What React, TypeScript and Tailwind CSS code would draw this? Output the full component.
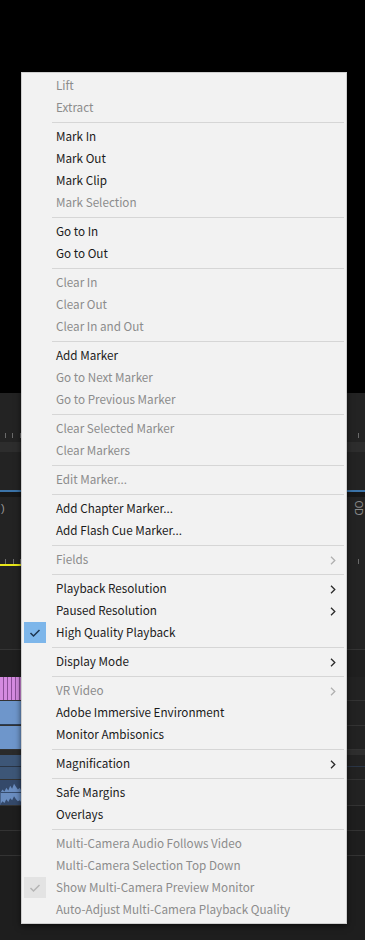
type Item = { label: string; disabled?: boolean; sub?: boolean; checked?: boolean };

const groups: Item[][] = [
  [{ label: 'Lift', disabled: true }, { label: 'Extract', disabled: true }],
  [
    { label: 'Mark In' },
    { label: 'Mark Out' },
    { label: 'Mark Clip' },
    { label: 'Mark Selection', disabled: true },
  ],
  [{ label: 'Go to In' }, { label: 'Go to Out' }],
  [
    { label: 'Clear In', disabled: true },
    { label: 'Clear Out', disabled: true },
    { label: 'Clear In and Out', disabled: true },
  ],
  [
    { label: 'Add Marker' },
    { label: 'Go to Next Marker', disabled: true },
    { label: 'Go to Previous Marker', disabled: true },
  ],
  [
    { label: 'Clear Selected Marker', disabled: true },
    { label: 'Clear Markers', disabled: true },
  ],
  [{ label: 'Edit Marker...', disabled: true }],
  [{ label: 'Add Chapter Marker...' }, { label: 'Add Flash Cue Marker...' }],
  [{ label: 'Fields', disabled: true, sub: true }],
  [
    { label: 'Playback Resolution', sub: true },
    { label: 'Paused Resolution', sub: true },
    { label: 'High Quality Playback', checked: true },
  ],
  [{ label: 'Display Mode', sub: true }],
  [
    { label: 'VR Video', disabled: true, sub: true },
    { label: 'Adobe Immersive Environment' },
    { label: 'Monitor Ambisonics' },
  ],
  [{ label: 'Magnification', sub: true }],
  [{ label: 'Safe Margins' }, { label: 'Overlays' }],
  [
    { label: 'Multi-Camera Audio Follows Video', disabled: true },
    { label: 'Multi-Camera Selection Top Down', disabled: true },
    { label: 'Show Multi-Camera Preview Monitor', disabled: true, checked: true },
    { label: 'Auto-Adjust Multi-Camera Playback Quality', disabled: true },
  ],
];

function Chevron({ disabled }: { disabled?: boolean }) {
  return (
    <svg width="6" height="9" viewBox="0 0 6 9" className="mr-[10px]">
      <path d="M1 0.8 L4.8 4.5 L1 8.2" fill="none" stroke={disabled ? '#b0b0b0' : '#2a2a2a'} strokeWidth="1.3" />
    </svg>
  );
}

function Check({ disabled }: { disabled?: boolean }) {
  return (
    <div
      className={`absolute left-[2px] top-0 w-[22px] h-[21px] flex items-center justify-center ${
        disabled ? 'bg-[#e3e3e3]' : 'bg-[#7db6ea]'
      }`}
    >
      <svg width="12" height="10" viewBox="0 0 12 10">
        <path
          d="M1.5 5 L4.5 8 L10.5 2"
          fill="none"
          stroke={disabled ? '#b5b5b5' : '#1d3550'}
          strokeWidth="1.5"
        />
      </svg>
    </div>
  );
}

function Row({ item }: { item: Item }) {
  return (
    <div className="relative h-[22px] flex items-center justify-between">
      {item.checked && <Check disabled={item.disabled} />}
      <span className={`pl-[34px] pb-[2px] ${item.disabled ? 'text-[#8c8c8c]' : 'text-[#1b1b1b]'}`}>{item.label}</span>
      {item.sub && <Chevron disabled={item.disabled} />}
    </div>
  );
}

function Background() {
  return (
    <div className="flex flex-col w-[365px] h-[940px] bg-[#1f1f1f]">
      <div className="h-[393px] bg-black" />
      <div className="h-[40px] bg-[#232323]" />
      {/* ruler ticks */}
      <div className="h-[6px] bg-[#232323] flex items-start">
        <div className="ml-[5px] w-px h-[5px] bg-[#6a6a6a]" />
        <div className="ml-[6px] w-px h-[5px] bg-[#6a6a6a]" />
        <div className="ml-[7px] w-px h-[5px] bg-[#6a6a6a]" />
        <div className="ml-auto mr-[12px] w-px h-[5px] bg-[#6a6a6a]" />
        <div className="mr-[6px] w-px h-[5px] bg-[#6a6a6a]" />
      </div>
      <div className="h-[3px] bg-[#232323]" />
      <div className="h-[10px] bg-[#2d2d2d]" />
      <div className="h-[38px] bg-[#232323]" />
      <div className="h-[2px] bg-[#3b73a8]" />
      <div className="h-[5px] bg-[#171717]" />
      <div className="h-[62px] bg-[#232323] flex items-start justify-between">
        <span className="mt-[4px] ml-[1px] text-[11px] leading-[14px] text-[#9a9a9a] font-['Liberation_Sans',sans-serif]">)</span>
        <span className="mt-[6px] mr-[0px] text-[10px] leading-[10px] text-[#8a8a8a] font-['Liberation_Sans',sans-serif] rotate-90">OD</span>
      </div>
      <div className="h-[5px] bg-[#232323] flex items-end">
        <div className="ml-[5px] w-px h-[5px] bg-[#6a6a6a]" />
        <div className="ml-[7px] w-px h-[5px] bg-[#6a6a6a]" />
        <div className="ml-[6px] w-px h-[5px] bg-[#6a6a6a]" />
        <div className="ml-auto mr-[12px] w-px h-[5px] bg-[#6a6a6a]" />
        <div className="mr-[6px] w-px h-[5px] bg-[#6a6a6a]" />
      </div>
      <div className="h-[2px] bg-[#232323] flex">
        <div className="w-[120px] bg-[#e8e61a]" />
      </div>
      <div className="h-[84px] bg-[#232323] border-b border-[#343434]" />
      <div className="h-[27px] bg-[#1f1f1f]" />
      {/* clip tracks */}
      <div className="h-[24px] flex border-b border-[#333]">
        <div className="w-[30px] bg-[#d58be0] bg-[repeating-linear-gradient(90deg,#d58be0_0px,#d58be0_3px,#8b4f98_3px,#8b4f98_4px)]" />
        <div className="flex-1 bg-[#222]" />
      </div>
      <div className="h-[25px] flex border-b border-[#333]">
        <div className="w-[30px] bg-[#6e96cb] border-b border-[#2b3d55]" />
        <div className="flex-1 bg-[#222]" />
      </div>
      <div className="h-[24px] flex border-b border-[#333]">
        <div className="w-[30px] bg-[#6e96cb]" />
        <div className="flex-1 bg-[#222]" />
      </div>
      <div className="h-[5px] flex">
        <div className="w-[30px] bg-[#2a2a2a]" />
        <div className="flex-1 bg-[#2e2e2e]" />
      </div>
      <div className="h-[12px] flex border-b border-[#2a3545]">
        <div className="w-[30px] bg-[#3d5677]" />
        <div className="flex-1 bg-[#222]" />
      </div>
      <div className="h-[13px] flex border-b border-[#333]">
        <div className="w-[30px] bg-[#3d5677]" />
        <div className="flex-1 bg-[#222]" />
      </div>
      <div className="h-[26px] flex border-b border-[#333]">
        <div className="w-[30px] bg-[#34496a] flex flex-col">
          <svg width="30" height="26" viewBox="0 0 30 26">
            <path
              d="M0 13 L2 10 L4 12 L6 8 L8 11 L10 6 L12 9 L14 4 L16 7 L18 10 L20 8 L22 12 L24 10 L26 13 L30 13 L30 26 L0 26 Z"
              fill="#6a8dc0"
            />
            <path d="M0 13 H30" stroke="#34496a" strokeWidth="1" />
            <path
              d="M0 25 L2 22 L4 24 L6 20 L8 23 L10 19 L12 21 L14 17 L16 20 L18 22 L20 21 L22 24 L24 23 L26 25 L30 25 L30 26 L0 26 Z"
              fill="#34496a"
            />
          </svg>
        </div>
        <div className="flex-1 bg-[#222]" />
      </div>
      <div className="h-[25px] bg-[#1e1e1e] border-b border-[#333]" />
      <div className="h-[25px] bg-[#1e1e1e] border-b border-[#333]" />
      <div className="flex-1 bg-[#1e1e1e]" />
    </div>
  );
}

export default function App() {
  return (
    <div className="relative w-[365px] h-[940px] overflow-hidden font-['Noto_Sans_CJK_KR','Noto_Sans',sans-serif] text-[11.7px]">
      <Background />
      {/* context menu */}
      <div className="absolute left-[21px] top-[72px] w-[326px] bg-[#f2f2f2] border border-[#cfcfcf] py-[2px] shadow-[0_2px_6px_rgba(0,0,0,0.6)]">
        {groups.map((g, gi) => (
          <div key={gi}>
            {gi > 0 && (
              <div className="h-[7px] flex items-center pl-[30px] pr-[2px]">
                <div className="h-px w-full bg-[#d6d6d6]" />
              </div>
            )}
            {g.map((it) => (
              <Row key={it.label} item={it} />
            ))}
          </div>
        ))}
      </div>
    </div>
  );
}
